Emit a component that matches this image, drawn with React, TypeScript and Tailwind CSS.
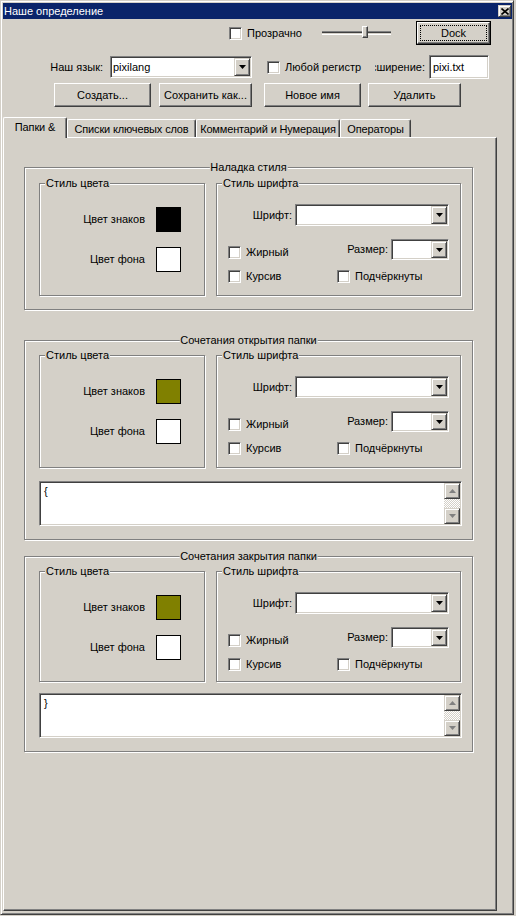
import clsx from "clsx";
import type { ReactNode } from "react";

// ━━━━━━━━━━━━━━━━━━━━━━━━━━━━━━━━━━━━━━━━━━━━━━━━━━━━━━━━━━━━━━━━━━━━━━
// classic bevels
const raised =
  "border border-t-white border-l-white border-b-[#404040] border-r-[#404040] shadow-[inset_-1px_-1px_0_#808080]";
const raisedSmall =
  "border border-t-[#d4d0c8] border-l-[#d4d0c8] border-b-[#404040] border-r-[#404040] shadow-[inset_1px_1px_0_#fff,inset_-1px_-1px_0_#808080]";
const sunken =
  "border border-t-[#808080] border-l-[#808080] border-b-white border-r-white shadow-[inset_1px_1px_0_#404040,inset_-1px_-1px_0_#d4d0c8]";

// ━━━━━━━━━━━━━━━━━━━━━━━━━━━━━━━━━━━━━━━━━━━━━━━━━━━━━━━━━━━━━━━━━━━━━━
// small controls
function Check({ label, className }: { label: string; className?: string }) {
  return (
    <div className={clsx("flex items-center", className)}>
      <span className={clsx("w-[13px] h-[13px] shrink-0 bg-white", sunken)} />
      <span className="ml-[5px] leading-[13px] whitespace-nowrap">{label}</span>
    </div>
  );
}

function Arrow({ dir = "down", color = "#000" }: { dir?: "up" | "down"; color?: string }) {
  return (
    <svg width="7" height="4" viewBox="0 0 7 4">
      <path d={dir === "down" ? "M0 0h7L3.5 4z" : "M0 4h7L3.5 0z"} fill={color} />
    </svg>
  );
}

function DropBtn() {
  return (
    <div className={clsx("w-[16px] self-stretch bg-[#d4d0c8] flex items-center justify-center", raisedSmall)}>
      <Arrow />
    </div>
  );
}

function Combo({ value, className }: { value?: string; className?: string }) {
  return (
    <div className={clsx("flex bg-white p-px", sunken, className)}>
      <span className="flex-1 self-center pl-[1px] leading-[13px]">{value}</span>
      <DropBtn />
    </div>
  );
}

function Button({ label, className }: { label: string; className?: string }) {
  return (
    <div className={clsx("h-[24px] flex items-center justify-center whitespace-nowrap", raised, className)}>
      {label}
    </div>
  );
}

function Memo({ text }: { text: string }) {
  return (
    <div className={clsx("w-[423px] h-[45px] flex bg-white p-px", sunken)}>
      <div className="flex-1 pl-[3px] pt-[2px] leading-[13px]">{text}</div>
      <div className="w-[16px] flex flex-col">
        <div className={clsx("h-[16px] bg-[#d4d0c8] flex items-center justify-center", raisedSmall)}>
          <Arrow dir="up" color="#808080" />
        </div>
        <div className="flex-1 bg-[repeating-conic-gradient(#fff_0_25%,#d4d0c8_0_50%)] bg-[length:2px_2px]" />
        <div className={clsx("h-[16px] bg-[#d4d0c8] flex items-center justify-center", raisedSmall)}>
          <Arrow color="#808080" />
        </div>
      </div>
    </div>
  );
}

// ━━━━━━━━━━━━━━━━━━━━━━━━━━━━━━━━━━━━━━━━━━━━━━━━━━━━━━━━━━━━━━━━━━━━━━
// group boxes
function Group({
  title,
  center,
  className,
  children,
}: {
  title: string;
  center?: boolean;
  className?: string;
  children?: ReactNode;
}) {
  return (
    <div
      className={clsx(
        "relative border border-[#808080] shadow-[inset_1px_1px_0_#fff,1px_1px_0_#fff]",
        className
      )}
    >
      <span
        className={clsx(
          "absolute top-[-7px] bg-[#d4d0c8] leading-[13px] px-px whitespace-nowrap",
          center ? "left-1/2 -translate-x-1/2" : "left-[5px]"
        )}
      >
        {title}
      </span>
      {children}
    </div>
  );
}

function ColorStyle({ fg, h }: { fg: string; h: string }) {
  return (
    <Group title="Стиль цвета" className={clsx("w-[166px] pt-[23px]", h)}>
      <div className="flex items-center">
        <span className="w-[105px] text-right leading-[13px]">Цвет знаков</span>
        <span className={clsx("ml-[11px] w-[25px] h-[25px] border border-black", fg)} />
      </div>
      <div className="flex items-center mt-[15px]">
        <span className="w-[105px] text-right leading-[13px]">Цвет фона</span>
        <span className="ml-[11px] w-[25px] h-[25px] border border-black bg-white" />
      </div>
    </Group>
  );
}

function FontStyle({ h }: { h: string }) {
  return (
    <Group title="Стиль шрифта" className={clsx("ml-[11px] w-[245px] pt-[20px]", h)}>
      <div className="flex items-center h-[22px]">
        <span className="w-[78px] text-right pr-[3px] leading-[13px]">Шрифт:</span>
        <Combo className="w-[154px] h-[22px]" />
      </div>
      <div className="flex h-[21px] mt-[13px]">
        <div className="w-[117px] pl-[11px] pt-[7px]">
          <Check label="Жирный" />
        </div>
        <span className="w-[57px] self-center text-right pr-[3px] leading-[13px]">Размер:</span>
        <Combo className="w-[58px] h-[21px]" />
      </div>
      <div className="flex mt-[10px]">
        <Check label="Курсив" className="ml-[11px] w-[109px]" />
        <Check label="Подчёркнуты" />
      </div>
    </Group>
  );
}

// ━━━━━━━━━━━━━━━━━━━━━━━━━━━━━━━━━━━━━━━━━━━━━━━━━━━━━━━━━━━━━━━━━━━━━━
const tabs = [
  { label: "Папки &", w: "w-[64px]" },
  { label: "Списки ключевых слов", w: "w-[129px]" },
  { label: "Комментарий и Нумерация", w: "w-[144px]" },
  { label: "Операторы", w: "w-[71px]" },
];

export default function App() {
  return (
    <div className="w-[516px] h-[916px] bg-[#d4d0c8] text-[11px] text-black font-['Liberation_Sans',Arial,sans-serif] overflow-hidden">
      <div className="w-[514px] h-[915px] flex flex-col border border-t-[#d4d0c8] border-l-[#d4d0c8] border-b-[#404040] border-r-[#404040] shadow-[inset_1px_1px_0_#fff,inset_-1px_-1px_0_#808080] pl-[2px] pr-[1px] pt-[2px]">
        {/* заголовок окна */}
        <div className="h-[16px] shrink-0 bg-[#0a246a] text-white flex items-center pl-[1px] pr-[1px]">
          <span className="flex-1 leading-[13px]">Наше определение</span>
          <div className={clsx("w-[13px] h-[12px] bg-[#d4d0c8] flex items-center justify-center", raisedSmall)}>
            <svg width="8" height="7" viewBox="0 0 8 7">
              <path d="M0.5 0.5L7.5 6.5M7.5 0.5L0.5 6.5" stroke="#000" strokeWidth="1.6" />
            </svg>
          </div>
        </div>

        {/* строка 1 */}
        <div className="mt-[2px] h-[24px] shrink-0 flex items-center">
          <Check label="Прозрачно" className="ml-[226px] w-[93px]" />
          <div className="relative w-[69px] h-[24px] flex items-center">
            <div className="w-full h-[4px] border-t border-t-[#808080] border-b border-b-white bg-[#d4d0c8] shadow-[inset_0_1px_0_#404040]" />
            <div className={clsx("absolute left-[40px] top-[5px] w-[6px] h-[12px] bg-[#d4d0c8]", raised)} />
          </div>
          <div className="ml-[25px] w-[75px] h-[24px] border border-black">
            <div className={clsx("h-full p-[2px]", raised)}>
              <div className="h-full border border-dotted border-black flex items-center justify-center leading-[13px]">
                Dock
              </div>
            </div>
          </div>
        </div>

        {/* строка 2 */}
        <div className="mt-[10px] h-[24px] shrink-0 flex items-center">
          <span className="w-[107px] text-right pr-[7px] leading-[13px]">Наш язык:</span>
          <Combo value="pixilang" className="w-[142px] h-[22px]" />
          <Check label="Любой регистр" className="ml-[15px] w-[105px]" />
          <div className="ml-[3px] w-[54px] pr-[4px] overflow-hidden flex justify-end whitespace-nowrap leading-[13px]">
            <span>Расширение:</span>
          </div>
          <div className={clsx("w-[60px] h-[24px] bg-white flex items-center pl-[3px] leading-[13px]", sunken)}>
            pixi.txt
          </div>
        </div>

        {/* строка 3 */}
        <div className="mt-[4px] h-[24px] shrink-0 flex">
          <Button label="Создать..." className="ml-[51px] w-[97px]" />
          <Button label="Сохранить как..." className="ml-[8px] w-[93px]" />
          <Button label="Новое имя" className="ml-[12px] w-[97px]" />
          <Button label="Удалить" className="ml-[7px] w-[93px]" />
        </div>

        {/* вкладки */}
        <div className="mt-[10px] h-[20px] shrink-0 flex items-start">
          {tabs.map((t, i) => (
            <div
              key={t.label}
              className={clsx(
                "flex items-center justify-center whitespace-nowrap leading-[13px] tracking-[-0.15px] rounded-t-[2px] bg-[#d4d0c8] border-l border-t border-r border-l-white border-t-white border-r-[#404040] shadow-[inset_-1px_0_0_#808080]",
                t.w,
                i === 0 ? "relative z-10 h-[21px] pb-[1px]" : "mt-[2px] h-[18px] pt-[1px]"
              )}
            >
              {t.label}
            </div>
          ))}
        </div>

        {/* панель */}
        <div className="w-[494px] h-[774px] shrink-0 border border-t-white border-l-white border-b-[#404040] border-r-[#404040] shadow-[inset_-1px_-1px_0_#808080] pl-[20px]">
          <Group title="Наладка стиля" center className="mt-[29px] w-[449px] h-[143px] pt-[15px] pl-[14px]">
            <div className="flex">
              <ColorStyle fg="bg-black" h="h-[113px]" />
              <FontStyle h="h-[113px]" />
            </div>
          </Group>

          <Group title="Сочетания открытия папки" center className="mt-[30px] w-[449px] h-[200px] pt-[14px] pl-[14px]">
            <div className="flex">
              <ColorStyle fg="bg-[#808000]" h="h-[113px]" />
              <FontStyle h="h-[113px]" />
            </div>
            <div className="mt-[13px]">
              <Memo text="{" />
            </div>
          </Group>

          <Group title="Сочетания закрытия папки" center className="mt-[16px] w-[449px] h-[196px] pt-[14px] pl-[14px]">
            <div className="flex">
              <ColorStyle fg="bg-[#808000]" h="h-[111px]" />
              <FontStyle h="h-[111px]" />
            </div>
            <div className="mt-[11px]">
              <Memo text="}" />
            </div>
          </Group>
        </div>
      </div>
    </div>
  );
}
